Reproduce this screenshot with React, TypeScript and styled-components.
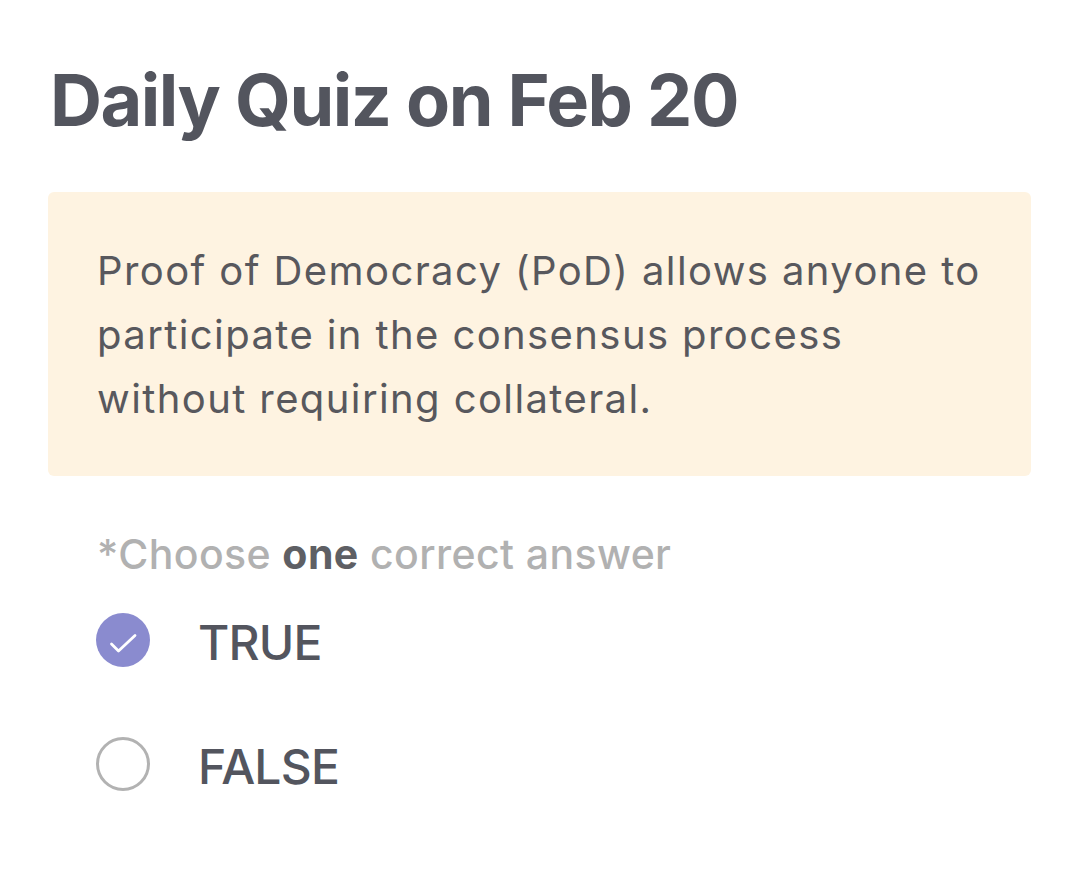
import React from "react";
import styled, { createGlobalStyle } from "styled-components";

const Global = createGlobalStyle`
  html, body { margin: 0; padding: 0; background: #ffffff; }
  body { font-family: Inter, "Noto Sans", sans-serif; -webkit-font-smoothing: antialiased; }
`;

const Page = styled.main`
  padding: 56px 42px 0 48px;
  display: flex;
  flex-direction: column;
`;

const Title = styled.h1`
  margin: 0 0 0 2px;
  font-size: 72px;
  line-height: 88px;
  font-weight: 700;
  color: #53555e;
  letter-spacing: -1.5px;
`;

const Statement = styled.section`
  margin-top: 48px;
  background: #fef3e1;
  border-radius: 6px;
  padding: 47px 30px 45px 49px;
  min-height: 284px;
  box-sizing: border-box;
`;

const StatementText = styled.p`
  margin: 0;
  max-width: 895px;
  font-size: 40px;
  line-height: 64px;
  font-weight: 400;
  color: #58585d;
  letter-spacing: 1.4px;
`;

const Hint = styled.p`
  margin: 53px 0 0 49px;
  font-size: 41px;
  line-height: 50px;
  color: #b1b1b1;
  font-weight: 500;
  letter-spacing: 0.4px;
  b { color: #5e5f64; font-weight: 700; }
`;

const Options = styled.ul`
  list-style: none;
  margin: 34px 0 0 48px;
  padding: 0;
  display: flex;
  flex-direction: column;
  gap: 70px;
`;

const Option = styled.li`
  display: flex;
  align-items: center;
  gap: 48px;
  height: 54px;
`;

const Radio = styled.span<{ $checked: boolean }>`
  width: 54px;
  height: 54px;
  box-sizing: border-box;
  border-radius: 50%;
  flex: none;
  display: flex;
  align-items: center;
  justify-content: center;
  background: ${(p) => (p.$checked ? "#8a8bcf" : "transparent")};
  border: ${(p) => (p.$checked ? "none" : "3px solid #b2b2b2")};
`;

const Label = styled.span`
  padding-top: 5px;
  font-size: 48px;
  font-weight: 500;
  color: #53555e;
  letter-spacing: -0.8px;
`;

const Check = () => (
  <svg width="54" height="54" viewBox="0 0 54 54" fill="none">
    <path d="M15.5 31 L22.5 38 L39 22.5" stroke="#ffffff" strokeWidth="2.8" strokeLinecap="round" strokeLinejoin="round" />
  </svg>
);

const answers = [
  { label: "TRUE", checked: true },
  { label: "FALSE", checked: false },
];

export default function App() {
  return (
    <>
      <Global />
      <Page>
        <Title>Daily Quiz on Feb 20</Title>
        <Statement>
          <StatementText>
            Proof of Democracy (PoD) allows anyone to participate in the consensus process without requiring collateral.
          </StatementText>
        </Statement>
        <Hint>
          *Choose <b>one</b> correct answer
        </Hint>
        <Options>
          {answers.map((a) => (
            <Option key={a.label}>
              <Radio $checked={a.checked}>{a.checked && <Check />}</Radio>
              <Label>{a.label}</Label>
            </Option>
          ))}
        </Options>
      </Page>
    </>
  );
}
